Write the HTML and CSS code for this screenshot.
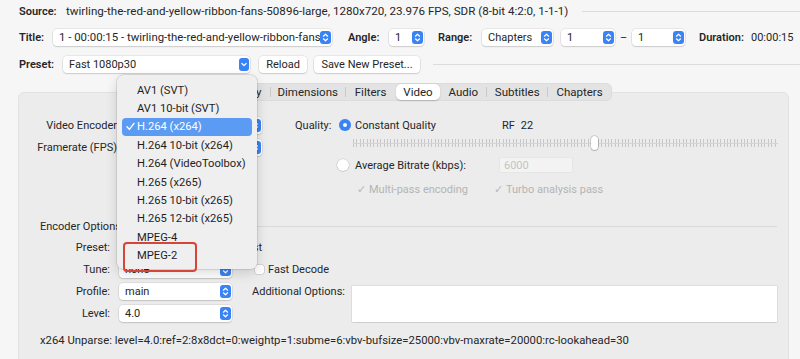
FILE: index.html
```html
<!DOCTYPE html>
<html>
<head>
<meta charset="utf-8">
<link rel="stylesheet" href="styles.css">
</head>
<body>
<div class="row src">
  <span class="lbl w-src">Source:</span>
  <span class="srctext">twirling-the-red-and-yellow-ribbon-fans-50896-large, 1280x720, 23.976 FPS, SDR (8-bit 4:2:0, 1-1-1)</span>
  <span class="rule rule-src"></span>
</div>

<div class="row ttl">
  <span class="lbl w-title">Title:</span>
  <div class="popup pw-title"><span class="ptext ttext">1 - 00:00:15 - twirling-the-red-and-yellow-ribbon-fans</span><svg class="step" width="11" height="13" viewBox="0 0 11 13"><rect width="11" height="13" rx="3" fill="#3a83f6"/><path d="M3.4 5.2 L5.5 3.2 L7.6 5.2 M3.4 7.8 L5.5 9.8 L7.6 7.8" stroke="#fff" stroke-width="1.2" fill="none" stroke-linecap="round" stroke-linejoin="round"/></svg></div>
  <span class="lbl w-angle ml16">Angle:</span>
  <div class="popup pw-angle"><span class="ptext">1</span><svg class="step" width="11" height="13" viewBox="0 0 11 13"><rect width="11" height="13" rx="3" fill="#3a83f6"/><path d="M3.4 5.2 L5.5 3.2 L7.6 5.2 M3.4 7.8 L5.5 9.8 L7.6 7.8" stroke="#fff" stroke-width="1.2" fill="none" stroke-linecap="round" stroke-linejoin="round"/></svg></div>
  <span class="lbl w-range ml14">Range:</span>
  <div class="popup pw-chap"><span class="ptext">Chapters</span><svg class="step" width="11" height="13" viewBox="0 0 11 13"><rect width="11" height="13" rx="3" fill="#3a83f6"/><path d="M3.4 5.2 L5.5 3.2 L7.6 5.2 M3.4 7.8 L5.5 9.8 L7.6 7.8" stroke="#fff" stroke-width="1.2" fill="none" stroke-linecap="round" stroke-linejoin="round"/></svg></div>
  <div class="popup pw-num ml8"><span class="ptext">1</span><svg class="step" width="11" height="13" viewBox="0 0 11 13"><rect width="11" height="13" rx="3" fill="#3a83f6"/><path d="M3.4 5.2 L5.5 3.2 L7.6 5.2 M3.4 7.8 L5.5 9.8 L7.6 7.8" stroke="#fff" stroke-width="1.2" fill="none" stroke-linecap="round" stroke-linejoin="round"/></svg></div>
  <span class="dash">–</span>
  <div class="popup pw-num2"><span class="ptext">1</span><svg class="step" width="11" height="13" viewBox="0 0 11 13"><rect width="11" height="13" rx="3" fill="#3a83f6"/><path d="M3.4 5.2 L5.5 3.2 L7.6 5.2 M3.4 7.8 L5.5 9.8 L7.6 7.8" stroke="#fff" stroke-width="1.2" fill="none" stroke-linecap="round" stroke-linejoin="round"/></svg></div>
  <span class="lbl w-dur ml14">Duration:</span>
  <span>00:00:15</span>
</div>

<div class="row pre">
  <span class="lbl w-preset">Preset:</span>
  <div class="popup pw-preset"><span class="ptext">Fast 1080p30</span><svg class="step" width="10" height="13" viewBox="0 0 10 13"><rect width="10" height="13" rx="3" fill="#3a83f6"/><path d="M2.9 5.5 L5 7.6 L7.1 5.5" stroke="#fff" stroke-width="1.2" fill="none" stroke-linecap="round" stroke-linejoin="round"/></svg></div>
  <span class="btn bw-reload">Reload</span>
  <span class="btn bw-save">Save New Preset...</span>
  <span class="rule rule-pre"></span>
</div>

<div class="tabs">
  <span class="tab t-sum">Summary</span><span class="sep"></span>
  <span class="tab t-dim">Dimensions</span><span class="sep"></span>
  <span class="tab t-fil">Filters</span>
  <span class="tab t-vid active">Video</span>
  <span class="tab t-aud">Audio</span><span class="sep"></span>
  <span class="tab t-sub">Subtitles</span><span class="sep"></span>
  <span class="tab t-chp">Chapters</span>
</div>

<div class="panel">
  <div class="vsec">
    <div class="vleft">
      <div class="vrow"><span class="vlabel">Video Encoder</span><div class="popup pw-enc"><span class="ptext">H.264 (x264)</span><svg class="step" width="11" height="13" viewBox="0 0 11 13"><rect width="11" height="13" rx="3" fill="#3a83f6"/><path d="M3.4 5.2 L5.5 3.2 L7.6 5.2 M3.4 7.8 L5.5 9.8 L7.6 7.8" stroke="#fff" stroke-width="1.2" fill="none" stroke-linecap="round" stroke-linejoin="round"/></svg></div></div>
      <div class="vrow"><span class="vlabel">Framerate (FPS)</span><div class="popup pw-enc"><span class="ptext">Same as source</span><svg class="step" width="11" height="13" viewBox="0 0 11 13"><rect width="11" height="13" rx="3" fill="#3a83f6"/><path d="M3.4 5.2 L5.5 3.2 L7.6 5.2 M3.4 7.8 L5.5 9.8 L7.6 7.8" stroke="#fff" stroke-width="1.2" fill="none" stroke-linecap="round" stroke-linejoin="round"/></svg></div></div>
    </div>
    <div class="vright">
      <div class="qrow">
        <span class="qlabel">Quality:</span>
        <span class="radio on"></span>
        <span class="cq">Constant Quality</span>
        <span>RF</span><span class="rf">22</span>
      </div>
      <div class="srow">
        <div class="slider"><span class="thumb"></span></div>
      </div>
      <div class="arow">
        <span class="radio off"></span>
        <span class="ab">Average Bitrate (kbps):</span>
        <span class="bitrate">6000</span>
      </div>
      <div class="crow">
        <span class="chk dis">✓</span><span class="mp">Multi-pass encoding</span>
        <span class="chk dis">✓</span><span>Turbo analysis pass</span>
      </div>
    </div>
  </div>

  <div class="eohead"><span>Encoder Options</span><span class="eoline"></span></div>

  <div class="eogrid">
    <span class="elabel">Preset:</span>
    <span></span>
    <span class="fastlbl">fast</span>
    <span></span>

    <span class="elabel">Tune:</span>
    <div class="popup pw-eo"><span class="ptext">none</span><svg class="step" width="11" height="13" viewBox="0 0 11 13"><rect width="11" height="13" rx="3" fill="#3a83f6"/><path d="M3.4 5.2 L5.5 3.2 L7.6 5.2 M3.4 7.8 L5.5 9.8 L7.6 7.8" stroke="#fff" stroke-width="1.2" fill="none" stroke-linecap="round" stroke-linejoin="round"/></svg></div>
    <span class="fd"><span class="box"></span>Fast Decode</span>
    <span></span>

    <span class="elabel">Profile:</span>
    <div class="popup pw-eo"><span class="ptext">main</span><svg class="step" width="11" height="13" viewBox="0 0 11 13"><rect width="11" height="13" rx="3" fill="#3a83f6"/><path d="M3.4 5.2 L5.5 3.2 L7.6 5.2 M3.4 7.8 L5.5 9.8 L7.6 7.8" stroke="#fff" stroke-width="1.2" fill="none" stroke-linecap="round" stroke-linejoin="round"/></svg></div>
    <span class="addl">Additional Options:</span>
    <div class="textarea"></div>

    <span class="elabel">Level:</span>
    <div class="popup pw-eo"><span class="ptext">4.0</span><svg class="step" width="11" height="13" viewBox="0 0 11 13"><rect width="11" height="13" rx="3" fill="#3a83f6"/><path d="M3.4 5.2 L5.5 3.2 L7.6 5.2 M3.4 7.8 L5.5 9.8 L7.6 7.8" stroke="#fff" stroke-width="1.2" fill="none" stroke-linecap="round" stroke-linejoin="round"/></svg></div>
    <span></span>
  </div>

  <div class="unparse">x264 Unparse: level=4.0:ref=2:8x8dct=0:weightp=1:subme=6:vbv-bufsize=25000:vbv-maxrate=20000:rc-lookahead=30</div>
</div>

<div class="menu">
  <div class="mi">AV1 (SVT)</div>
  <div class="mi">AV1 10-bit (SVT)</div>
  <div class="mi sel"><svg class="check" width="9" height="9" viewBox="0 0 9 9"><path d="M1 4.8 L3.4 7.4 L8 1.4" stroke="#fff" stroke-width="1.4" fill="none" stroke-linecap="round" stroke-linejoin="round"/></svg>H.264 (x264)</div>
  <div class="mi">H.264 10-bit (x264)</div>
  <div class="mi">H.264 (VideoToolbox)</div>
  <div class="mi">H.265 (x265)</div>
  <div class="mi">H.265 10-bit (x265)</div>
  <div class="mi">H.265 12-bit (x265)</div>
  <div class="mi">MPEG-4</div>
  <div class="mi mark">MPEG-2</div>
</div>
</body>
</html>
```

FILE: styles.css
```css
* { box-sizing: border-box; }
html, body { margin: 0; padding: 0; }
body {
  width: 800px;
  height: 359px;
  overflow: hidden;
  position: relative;
  background: #f6f6f6;
  font-family: Roboto, "Liberation Sans", sans-serif;
  font-size: 11px;
  color: #262626;
}
.row { display: flex; align-items: center; white-space: nowrap; padding-left: 19px; }
.src { height: 22px; }
.srctext { font-size: 11.6px; }
.ttl { height: 30px; }
.pre { height: 24px; }
.lbl { font-weight: 600; }
.w-src { width: 47px; }
.w-title { width: 34px; }
.w-angle { width: 41px; }
.w-range { width: 44px; }
.w-dur { width: 52px; }
.w-preset { width: 44px; }
.ml16 { margin-left: 16px; }
.ml14 { margin-left: 14px; }
.ml8 { margin-left: 8px; }
.rule { flex: 1; height: 1px; background: #dcdcdc; }
.rule-src { margin-left: 14px; }
.rule-pre { margin-left: 13px; }

.popup {
  height: 17px;
  background: #fff;
  border-radius: 4px;
  box-shadow: 0 0 0 0.5px rgba(0,0,0,0.12), 0 1px 1.5px rgba(0,0,0,0.12);
  display: flex;
  align-items: center;
  padding: 0 1px 0 6px;
  overflow: hidden;
}
.ptext { flex: 1; overflow: hidden; white-space: nowrap; }
.ttext { font-size: 11.4px; }
.step { flex: none; display: block; }
.pw-title { width: 279px; }
.pw-angle { width: 35px; }
.pw-chap { width: 71px; }
.pw-num { width: 54px; }
.pw-num2 { width: 53px; }
.pw-preset { width: 187px; }
.dash { width: 17px; text-align: center; }

.btn {
  height: 17px;
  background: #fff;
  border-radius: 4px;
  box-shadow: 0 0 0 0.5px rgba(0,0,0,0.12), 0 1px 1.5px rgba(0,0,0,0.12);
  display: flex; align-items: center; justify-content: center;
}
.bw-reload { width: 48px; margin-left: 9px; }
.bw-save { width: 106px; margin-left: 7px; }

.tabs {
  position: relative;
  z-index: 2;
  margin: 7px 0 -9px 203px;
  width: 409px;
  height: 18px;
  background: #e3e3e3;
  border-radius: 6px;
  box-shadow: inset 0 0 0 0.5px rgba(0,0,0,0.06);
  display: flex;
  align-items: center;
  padding: 0 1px;
  white-space: nowrap;
  font-size: 11.5px;
}
.tab { height: 16px; display: flex; align-items: center; justify-content: center; }
.sep { width: 1px; height: 10px; background: #c9c9c9; flex: none; }
.t-sum { width: 66px; }
.t-dim { width: 74px; }
.t-fil { width: 50px; }
.t-vid { width: 45px; }
.t-aud { width: 46px; }
.t-sub { width: 60px; }
.t-chp { width: 63px; }
.active { background: #fff; border-radius: 5px; box-shadow: 0 0.5px 1.5px rgba(0,0,0,0.2); }

.panel {
  margin-left: 18px;
  width: 771px;
  height: 280px;
  background: #ececec;
  border: 1px solid #e2e2e2;
  border-radius: 6px;
}
.vsec { display: flex; height: 124px; }
.vleft { width: 276px; padding-top: 21px; }
.vrow { display: flex; align-items: center; height: 22px; }
.vlabel { width: 98px; text-align: right; white-space: nowrap; }
.pw-enc { width: 140px; margin-left: 5px; }
.vright { padding-top: 23px; }
.qrow, .srow, .arow, .crow { display: flex; align-items: center; height: 18px; white-space: nowrap; }
.qlabel { width: 35px; text-align: right; margin-right: 9px; }
.radio { width: 12px; height: 12px; border-radius: 50%; flex: none; }
.radio.on { background: #3a83f6; box-shadow: inset 0 0 0 4px #3a83f6, inset 0 0 0 12px #fff; }
.radio.off { background: #fff; box-shadow: 0 0 0 0.5px rgba(0,0,0,0.15), 0 0.5px 1px rgba(0,0,0,0.15); margin-left: 42px; }
.cq { margin-left: 4px; width: 147px; }
.rf { margin-left: 6px; }
.slider {
  margin-left: 58px;
  width: 425px;
  height: 8px;
  position: relative;
  background:
    linear-gradient(#d4d4d4, #d4d4d4) center / 100% 1px no-repeat,
    repeating-linear-gradient(to right, #c6c6c6 0 1px, transparent 1px 3.4px);
}
.thumb {
  position: absolute;
  left: 238px; top: -3px;
  width: 7px; height: 14px;
  background: #fff;
  border-radius: 4px;
  box-shadow: 0 0 0 0.5px rgba(0,0,0,0.25), 0 1px 1px rgba(0,0,0,0.15);
}
.arow { margin-top: 4px; }
.ab { margin-left: 6px; width: 145px; }
.bitrate {
  width: 72px; height: 14px;
  background: #f3f3f3;
  color: #c4c4c4;
  padding-left: 4px;
  display: flex; align-items: center;
  box-shadow: 0 0 0 0.5px rgba(0,0,0,0.05);
}
.crow { margin-top: 6px; color: #b4b4b4; }
.chk { width: 10px; margin-left: 62px; margin-right: 2px; font-size: 11px; color: #b8b8b8; }
.chk + .mp { width: 125px; }
.mp + .chk { margin-left: 0; }

.eohead { display: flex; align-items: center; height: 18px; padding-left: 21px; white-space: nowrap; }
.eoline { flex: 1; height: 1px; background: #dadada; margin: 0 11px 0 8px; }

.eogrid {
  display: grid;
  grid-template-columns: 91px 113px 102px 425px;
  grid-auto-rows: 22px;
  column-gap: 9px;
  align-items: center;
  margin-top: 1px;
  white-space: nowrap;
}
.elabel { text-align: right; }
.pw-eo { width: 113px; }
.fastlbl { width: 21px; text-align: right; }
.fd { display: flex; align-items: center; margin-left: 14px; }
.box { width: 9px; height: 9px; background: #fff; border-radius: 2px; box-shadow: 0 0 0 0.5px rgba(0,0,0,0.2); margin-right: 4px; }
.addl { margin-left: 11px; }
.textarea {
  grid-row: span 2;
  align-self: start;
  margin-top: 6px;
  height: 36px;
  background: #fff;
  box-shadow: 0 0 0 0.5px rgba(0,0,0,0.12), 0 0.5px 1px rgba(0,0,0,0.08);
}
.unparse { margin-top: 8px; height: 18px; line-height: 18px; padding-left: 21px; white-space: nowrap; font-size: 11.3px; }

.menu {
  position: absolute;
  left: 117px; top: 75px;
  width: 140px; height: 194px;
  background: #efefef;
  border-radius: 6px;
  box-shadow: 0 0 0 0.5px rgba(0,0,0,0.18), 0 4px 12px rgba(0,0,0,0.15);
  padding: 6px 5px 4px;
  font-size: 11.2px;
  z-index: 5;
}
.mi {
  height: 18.4px;
  display: flex; align-items: center;
  padding-left: 15px;
  white-space: nowrap;
  position: relative;
  color: #1e1e1e;
}
.mi.sel { background: #5b9bf3; color: #fff; border-radius: 4px; padding-left: 4px; }
.check { margin-right: 2px; }
.mark::after {
  content: "";
  position: absolute;
  left: 1px; top: -5px;
  width: 70px; height: 26px;
  border: 2px solid #d6453a;
  border-radius: 4px;
}
```
